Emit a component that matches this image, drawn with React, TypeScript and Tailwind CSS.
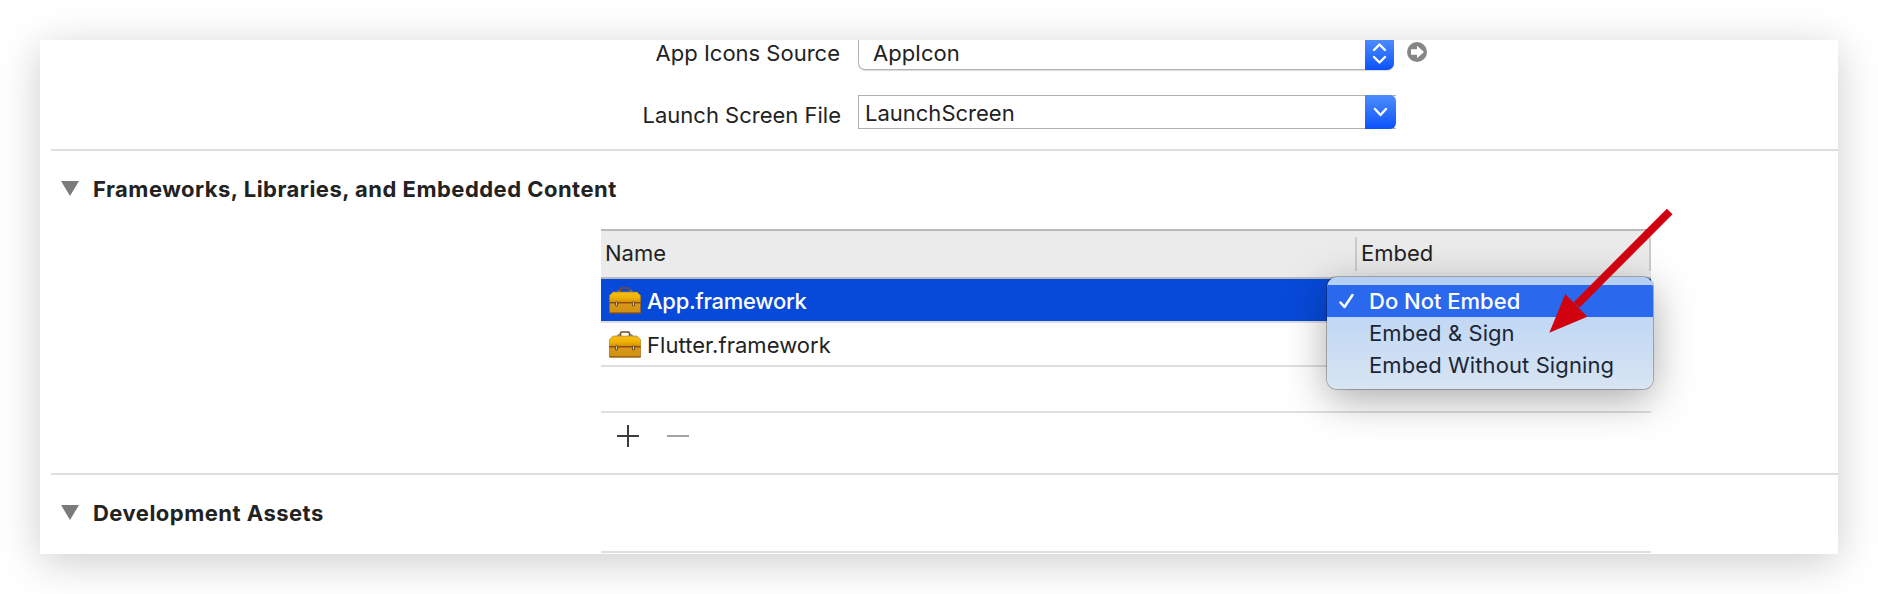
import React from "react";

function Toolbox() {
  return (
    <svg width="32" height="27" viewBox="0 0 32 27" className="shrink-0">
      <defs>
        <linearGradient id="lid" x1="0" y1="0" x2="0" y2="1">
          <stop offset="0" stopColor="#f3bd22" />
          <stop offset="0.5" stopColor="#f0b400" />
          <stop offset="1" stopColor="#cf8b10" />
        </linearGradient>
        <linearGradient id="body" x1="0" y1="0" x2="0" y2="1">
          <stop offset="0" stopColor="#d9981a" />
          <stop offset="1" stopColor="#cf9012" />
        </linearGradient>
      </defs>
      <path d="M11.5 5V2.2Q11.5 1 12.7 1H19.3Q20.5 1 20.5 2.2V5" fill="none" stroke="#7d4a1c" strokeWidth="1.6" />
      <path d="M4 5H28L31.5 8.5V16H0.5V8.5Z" fill="url(#lid)" stroke="#b27a10" strokeWidth="0.6" />
      <path d="M0.5 16H31.5V26H0.5Z" fill="url(#body)" stroke="#9a5c0c" strokeWidth="0.6" />
      <path d="M0.3 15.7H31.7M0.3 26H31.7" stroke="#8a4b0a" strokeWidth="1.2" />
      <path d="M8.5 5.2Q9 3.5 11 3.7M20.8 3.7Q23 3.5 23.5 5.2" fill="none" stroke="#777" strokeWidth="1.4" />
      <rect x="6.4" y="14.7" width="2.2" height="4.4" rx="1.1" fill="#c9c4b4" stroke="#584020" strokeWidth="0.9" />
      <rect x="23.4" y="14.7" width="2.2" height="4.4" rx="1.1" fill="#c9c4b4" stroke="#584020" strokeWidth="0.9" />
    </svg>
  );
}

function SectionTitle({ children }: { children: React.ReactNode }) {
  return (
    <div className="flex h-8 items-center pl-[21px]">
      <svg width="18" height="15" viewBox="0 0 18 15" className="shrink-0">
        <path d="M0 0H18L9 15Z" fill="#7b7b7b" />
      </svg>
      <h2 className="ml-[14px] pt-[2px] text-[22px] leading-8 font-bold tracking-[0.48px]">{children}</h2>
    </div>
  );
}

export default function App() {
  return (
    <div className="h-[594px] w-[1878px] overflow-hidden bg-white p-10 font-['Inter',sans-serif] text-[22px] text-[#222]">
      <div className="relative flex h-[514px] w-[1798px] flex-col overflow-hidden bg-white shadow-[0_8px_40px_rgba(0,0,0,0.2)]">
        <div className="flex h-[31px] shrink-0">
          <span className="w-[800px] text-right leading-[26px]">App Icons Source</span>
          <div className="ml-[18px] flex h-[30px] w-[536px] rounded-b-[7px] border border-t-0 border-[#b4b4b4] shadow-[0_1px_1px_rgba(0,0,0,0.15)]">
            <span className="flex-1 pl-[14px] leading-[26px]">AppIcon</span>
            <div className="-mr-px -mb-px flex w-[29px] justify-center rounded-br-[7px] bg-linear-to-b from-[#4d8bfb] to-[#0b50fb]">
              <svg width="29" height="30" viewBox="0 0 29 30" fill="none" stroke="#fff" strokeWidth="2.4" strokeLinecap="round" strokeLinejoin="round">
                <path d="M9 10L14.5 4.5L20 10M9 17L14.500 22.500L20 17" />
              </svg>
            </div>
          </div>
          <svg width="20" height="20" viewBox="0 0 20 20" className="mt-[2px] ml-[13px]">
            <circle cx="10" cy="10" r="10" fill="#868686" />
            <path d="M4 7.3H10V3.7L17 10L10 16.3V12.7H4Z" fill="#fff" />
          </svg>
        </div>
        <div className="mt-6 flex h-[34px] shrink-0">
          <span className="w-[801px] pt-[4px] text-right leading-8">Launch Screen File</span>
          <div className="ml-[17px] flex w-[538px] border border-r-0 border-[#b0b0b0]">
            <span className="flex-1 pl-[6px] leading-[35px]">LaunchScreen</span>
            <div className="-my-px flex w-[31px] items-center justify-center rounded-r-[6px] bg-linear-to-b from-[#4d8bfb] to-[#0b50fb]">
              <svg width="31" height="34" viewBox="0 0 31 34" fill="none" stroke="#fff" strokeWidth="2.4" strokeLinecap="round" strokeLinejoin="round">
                <path d="M10 14L15.5 20L21 14" />
              </svg>
            </div>
          </div>
        </div>

        <div className="mt-5 ml-[11px] h-[2px] shrink-0 bg-[#dfdfdf]" />
        <div className="mt-[21px] shrink-0">
          <SectionTitle>Frameworks, Libraries, and Embedded Content</SectionTitle>
        </div>

        <div className="mt-[25px] ml-[561px] h-[230px] w-[1050px] shrink-0">
          <div className="flex h-[50px] items-center border-y-2 border-[#b9b9b9] bg-[#ebebeb]">
            <span className="w-[754px] pb-[2px] pl-1">Name</span>
            <div className="flex h-[34px] flex-1 items-center border-x-2 border-[#cbcbcb] pb-[2px] pl-1">Embed</div>
          </div>
          <div className="flex h-[44px] items-center border-b-2 border-[#dfdfdf] bg-[#074ad9] bg-clip-padding pl-2 text-white">
            <Toolbox />
            <span className="ml-[6px] pt-[2px] font-medium tracking-[-0.28px]">App.framework</span>
          </div>
          <div className="flex h-[44px] items-center border-b-2 border-[#dfdfdf] pl-2">
            <Toolbox />
            <span className="ml-[6px] pt-[2px] tracking-[0.05px]">Flutter.framework</span>
          </div>
          <div className="h-[46px] border-b-2 border-[#dfdfdf]" />
          <div className="flex h-[46px] items-center gap-7 pl-4">
            <svg width="22" height="22" viewBox="0 0 22 22" stroke="#3c3c3c" strokeWidth="2">
              <path d="M11 0V22M0 11H22" />
            </svg>
            <svg width="22" height="22" viewBox="0 0 22 22" stroke="#a4a4a4" strokeWidth="2">
              <path d="M0 11H22" />
            </svg>
          </div>
        </div>

        <div className="mt-[14px] ml-[11px] h-[2px] shrink-0 bg-[#dfdfdf]" />
        <div className="mt-[21px] shrink-0">
          <SectionTitle>Development Assets</SectionTitle>
        </div>
        <div className="mt-[23px] ml-[561px] h-[2px] w-[1050px] shrink-0 bg-[#dfdfdf]" />

        <div className="absolute top-[237px] left-[1287px] h-[112px] w-[326px] overflow-hidden rounded-[10px] bg-linear-to-b from-[#b3cff5] to-[#d8e5f2] pt-2 text-[#1b2636] shadow-[0_0_0_1px_rgba(0,0,0,0.25),0_10px_42px_rgba(0,0,0,0.34)]">
          <div className="flex h-8 items-center bg-[#2a68ee] pl-[12px] font-medium text-white">
            <svg width="15" height="16" viewBox="0 0 15 16" fill="none" stroke="#fff" strokeWidth="2.5" strokeLinecap="round" strokeLinejoin="round">
              <path d="M1.5 9.5L5.5 14L13.5 2" />
            </svg>
            <span className="ml-[15px]">Do Not Embed</span>
          </div>
          <div className="flex h-8 items-center pl-[42px] tracking-[0.08px]">Embed &amp; Sign</div>
          <div className="flex h-8 items-center pl-[42px] tracking-[0.1px]">Embed Without Signing</div>
        </div>

        <svg className="absolute top-[168px] left-[1508px]" width="126" height="126" viewBox="0 0 126 126">
          <path d="M121.700 3.500L28.500 97" stroke="#d0020f" strokeWidth="8" />
          <path d="M1.300 124.700L17.300 86L39.300 108.700Z" fill="#d0020f" />
        </svg>
      </div>
    </div>
  );
}
